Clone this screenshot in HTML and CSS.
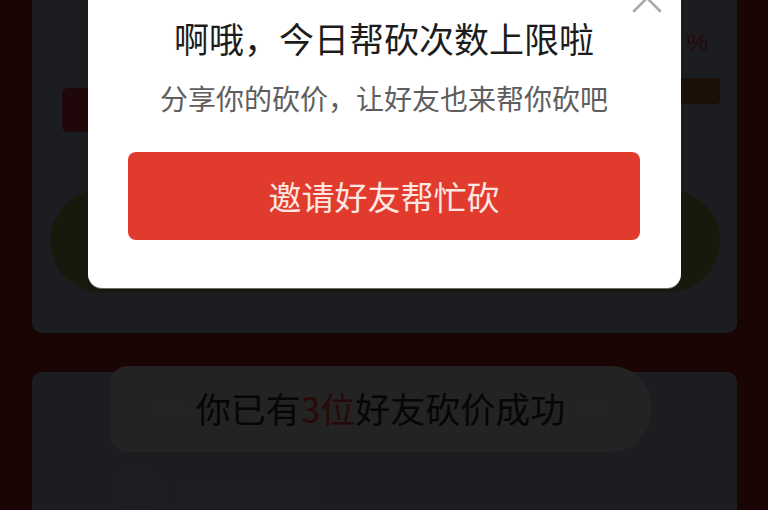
FILE: index.html
```html
<!DOCTYPE html>
<html lang="zh-CN">
<head>
<meta charset="utf-8">
<title>帮砍</title>
<link rel="stylesheet" href="styles.css">
</head>
<body>
<div class="page">
  <section class="card card-goods">
    <div class="goods">
      <div class="goods-left">
        <span class="tag"></span>
      </div>
      <div class="goods-right">
        <span class="percent">%</span>
        <span class="badge"></span>
      </div>
    </div>
    <div class="cut-btn"></div>
  </section>

  <section class="card card-friends">
    <div class="banner">
      <svg class="deco" width="34" height="14" viewBox="0 0 34 14"><path d="M4 5 L9 8 M14 4 L20 9 M24 9 Q28 5 32 8" stroke="#b8b8b8" stroke-width="2" fill="none" stroke-linecap="round"/></svg>
      <span class="banner-text">你已有<em>3位</em>好友砍价成功</span>
      <svg class="deco" width="34" height="14" viewBox="0 0 34 14"><path d="M2 8 Q6 5 10 8 M14 9 L20 4 M25 8 L30 5" stroke="#b8b8b8" stroke-width="2" fill="none" stroke-linecap="round"/></svg>
    </div>
    <div class="friend-row">
      <span class="avatar"></span>
      <span class="line"></span>
    </div>
  </section>
</div>

<div class="mask"></div>

<div class="modal">
  <svg class="close" width="32" height="32" viewBox="0 0 32 32"><path d="M3 3 L29 29 M29 3 L3 29" stroke="#a9a9a9" stroke-width="2.6" stroke-linecap="round"/></svg>
  <h2 class="modal-title">啊哦，今日帮砍次数上限啦</h2>
  <p class="modal-sub">分享你的砍价，让好友也来帮你砍吧</p>
  <button class="invite-btn">邀请好友帮忙砍</button>
</div>
</body>
</html>
```

FILE: styles.css
```css
* {
  box-sizing: border-box;
}

html, body {
  margin: 0;
  padding: 0;
}

body {
  width: 768px;
  height: 510px;
  overflow: hidden;
  position: relative;
  background: #7f1f14;
  font-family: "Noto Sans CJK SC", "Noto Sans", sans-serif;
}

.page {
  display: flex;
  flex-direction: column;
  gap: 39px;
  padding: 0 31px 0 32px;
}

.card {
  background: #8c91a5;
  border-radius: 10px;
}

.card-goods {
  margin-top: -40px;
  padding: 70px 17px 41px 18px;
}

.goods {
  display: flex;
  justify-content: space-between;
  height: 160px;
}

.goods-left {
  display: flex;
  align-items: flex-start;
  padding: 58px 0 0 12px;
}

.tag {
  display: block;
  width: 100px;
  height: 44px;
  border-radius: 6px;
  background: #a02a36;
}

.goods-right {
  display: flex;
  flex-direction: column;
  align-items: flex-end;
  gap: 22px;
}

.percent {
  display: block;
  width: 60px;
  text-align: right;
  color: #c22a38;
  font-size: 24px;
  line-height: 26px;
  font-family: "Liberation Sans", sans-serif;
  padding-right: 12px;
}

.badge {
  display: block;
  width: 90px;
  height: 26px;
  border-radius: 4px;
  background: #8a4a1e;
}

.cut-btn {
  width: 670px;
  height: 102px;
  border-radius: 51px;
  background: #767d42;
}

.card-friends {
  height: 138px;
  border-radius: 10px 10px 0 0;
  display: flex;
  flex-direction: column;
  align-items: center;
  overflow: visible;
}

.banner {
  flex: 0 0 86px;
  margin-top: -6px;
  margin-left: -8px;
  width: 541px;
  height: 86px;
  border-radius: 18px 40px 40px 18px;
  background: #adadad;
  display: flex;
  align-items: center;
  justify-content: center;
  gap: 10px;
  padding-bottom: 2px;
}

.banner-text {
  font-size: 35px;
  line-height: 44px;
  color: #202020;
}

.banner-text em {
  font-style: normal;
  color: #c83030;
}

.deco {
  display: block;
}

.friend-row {
  flex: 0 0 auto;
  align-self: flex-start;
  display: flex;
  align-items: center;
  gap: 14px;
  padding: 14px 0 0 80px;
}

.avatar {
  display: block;
  width: 50px;
  height: 50px;
  border-radius: 50%;
  background: #9196aa;
}

.line {
  display: block;
  width: 140px;
  height: 14px;
  border-radius: 7px;
  background: #9196aa;
}

.mask {
  position: absolute;
  inset: 0;
  background: rgba(0, 0, 0, 0.8);
}

.modal {
  position: absolute;
  left: 88px;
  top: -40px;
  width: 593px;
  height: 328px;
  background: #ffffff;
  border-radius: 14px;
  box-shadow: 0 1px 0 #6a6a6a;
  display: flex;
  flex-direction: column;
  align-items: center;
  padding: 56px 41px 0 40px;
}

.close {
  position: absolute;
  left: 543px;
  top: 22px;
}

.modal-title {
  margin: 0;
  font-size: 35px;
  line-height: 44px;
  font-weight: 400;
  color: #1c1c1c;
  white-space: nowrap;
}

.modal-sub {
  margin: 20px 0 0;
  font-size: 28px;
  line-height: 36px;
  font-weight: 400;
  color: #5e5e5e;
  white-space: nowrap;
}

.invite-btn {
  margin-top: 36px;
  width: 100%;
  height: 88px;
  border: 0;
  border-radius: 8px;
  background: #e03b2d;
  color: #fde6e1;
  font-family: inherit;
  font-size: 33px;
  font-weight: 400;
  line-height: 88px;
  padding: 0 0 4px;
}
```
